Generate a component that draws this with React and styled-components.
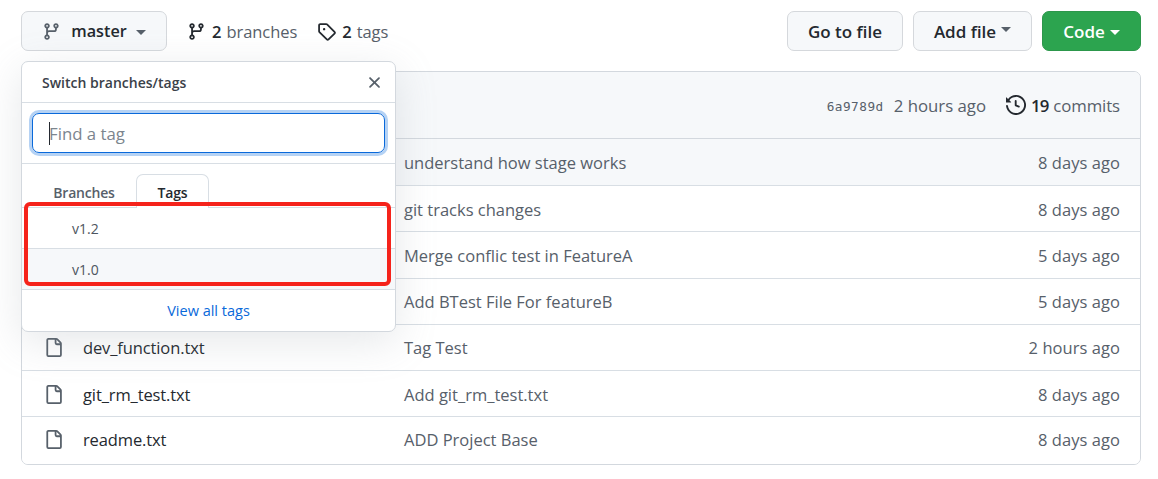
import React from "react";
import styled, { createGlobalStyle } from "styled-components";

const GlobalStyle = createGlobalStyle`
  html, body {
    margin: 0;
    background: #fff;
    color: #24292f;
    font-family: "Open Sans", "Noto Sans", Arial, sans-serif;
  }
`;

const Page = styled.div`
  position: relative;
  width: 1158px;
  height: 479px;
  box-sizing: border-box;
  padding: 11px 17px 0 21px;
  overflow: hidden;
`;

const Toolbar = styled.div`
  display: flex;
  align-items: center;
  height: 40px;
  margin-bottom: 20px;
`;

const Button = styled.div`
  display: flex;
  align-items: center;
  justify-content: center;
  box-sizing: border-box;
  height: 40px;
  margin-left: ${(p) => p.$gap || 0}px;
  width: ${(p) => p.$width}px;
  border: 1px solid ${(p) => (p.$primary ? "#2c974b" : "#d5d8dc")};
  border-radius: 7px;
  background: ${(p) => (p.$primary ? "#2ca44f" : "#f6f8fa")};
  color: ${(p) => (p.$primary ? "#fff" : "#24292f")};
  font-size: ${(p) => p.$size || 17}px;
  font-weight: 600;
`;

const BranchName = styled.span`
  margin-left: 10px;
`;

const Caret = styled.span`
  display: inline-block;
  margin-left: ${(p) => p.$gap || 6}px;
  margin-top: ${(p) => p.$top || 2}px;
  border-style: solid;
  border-width: 5px 5px 0;
  border-color: ${(p) => p.$color || "#57606a"} transparent transparent;
`;

const Stat = styled.div`
  display: flex;
  align-items: center;
  margin-left: ${(p) => p.$gap}px;
  font-size: 16.5px;
  color: #57606a;
  letter-spacing: -0.05px;
  strong {
    color: #24292f;
    font-weight: 600;
    margin: 0 5px 0 6px;
  }
`;

const Spacer = styled.div`
  flex: 1;
`;

const Icon = styled.svg`
  display: block;
  flex: none;
  fill: currentColor;
  color: ${(p) => p.$color || "#24292f"};
`;

const Box = styled.div`
  border: 1px solid #d3d8de;
  border-radius: 7px;
  overflow: hidden;
`;

const BoxHeader = styled.div`
  display: flex;
  align-items: center;
  justify-content: flex-end;
  height: 66px;
  padding: 0 20px;
  background: #f6f8fa;
  border-bottom: 1px solid #d3d8de;
  font-size: 16.8px;
  color: #57606a;
`;

const Sha = styled.span`
  font-family: "DejaVu Sans Mono", "Liberation Mono", monospace;
  font-size: 12.7px;
  letter-spacing: 0.5px;
  margin-right: 10px;
  margin-top: 2px;
`;

const Commits = styled.span`
  display: flex;
  align-items: center;
  margin-left: 20px;
  letter-spacing: -0.1px;
  strong {
    color: #24292f;
    font-weight: 600;
    letter-spacing: -1px;
    margin: 0 5px 0 5px;
  }
`;

const Row = styled.div`
  display: grid;
  grid-template-columns: 22px 338px 1fr auto;
  align-items: center;
  box-sizing: border-box;
  height: ${(p) => (p.$last ? 48 : 46.2)}px;
  padding: ${(p) => (p.$last ? "0 20px 2px 22px" : "1px 20px 0 22px")};
  background: ${(p) => (p.$hovered ? "#f6f8fa" : "#fff")};
  border-top: ${(p) => (p.$first ? "none" : "1px solid #d8dee4")};
  font-size: 16.5px;
`;

const FileName = styled.span`
  padding-left: 17px;
  color: #24292f;
  letter-spacing: -0.12px;
`;

const Message = styled.span`
  color: #57606a;
`;

const Age = styled.span`
  color: #57606a;
  letter-spacing: 0.05px;
`;

const Popover = styled.div`
  position: absolute;
  left: 21px;
  top: 61px;
  width: 375px;
  height: 271px;
  box-sizing: border-box;
  background: #fff;
  border: 1px solid #d3d8de;
  border-radius: 7px;
  box-shadow: 0 10px 40px rgba(140, 149, 159, 0.22);
  display: flex;
  flex-direction: column;
`;

const PopHeader = styled.div`
  display: flex;
  align-items: center;
  justify-content: space-between;
  height: 40px;
  padding: 0 11px 0 20px;
  border-bottom: 1px solid #d8dee4;
  font-size: 14px;
  font-weight: 600;
  color: #3a4149;
`;

const FilterArea = styled.div`
  padding: 10px;
  height: 40px;
  border-bottom: 1px solid #d8dee4;
`;

const Filter = styled.div`
  display: flex;
  align-items: center;
  box-sizing: border-box;
  height: 40px;
  padding-left: 16px;
  border: 1px solid #0969da;
  border-radius: 7px;
  box-shadow: 0 0 0 3px rgba(9, 105, 218, 0.3);
  font-size: 16.8px;
  color: #7c858e;
`;

const TextCursor = styled.span`
  width: 1px;
  height: 23px;
  margin-right: -1px;
  background: #24292f;
`;

const Tabs = styled.div`
  display: flex;
  align-items: flex-end;
  height: 44px;
  padding-left: 10px;
  border-bottom: 1px solid #d8dee4;
  box-sizing: border-box;
`;

const Tab = styled.div`
  display: flex;
  align-items: center;
  justify-content: center;
  box-sizing: border-box;
  width: ${(p) => p.$width}px;
  height: 34px;
  padding-top: 2px;
  margin-bottom: -1px;
  font-size: 14px;
  font-weight: 600;
  letter-spacing: -0.2px;
  color: ${(p) => (p.$active ? "#24292f" : "#57606a")};
  background: ${(p) => (p.$active ? "#fff" : "transparent")};
  border: 1px solid ${(p) => (p.$active ? "#d8dee4" : "transparent")};
  border-bottom: none;
  border-radius: 7px 7px 0 0;
`;

const TagItem = styled.div`
  display: flex;
  align-items: ${(p) => (p.$clipped ? "flex-start" : "center")};
  box-sizing: border-box;
  height: ${(p) => p.$height}px;
  padding: ${(p) => (p.$clipped ? "11px" : "0")} 0 0 50px;
  background: ${(p) => (p.$selected ? "#f6f8fa" : "#fff")};
  border-top: ${(p) => (p.$selected ? "1px solid #d8dee4" : "none")};
  font-size: 14px;
  color: #4d5560;
`;

const PopFooter = styled.div`
  display: flex;
  align-items: center;
  justify-content: center;
  flex: 1;
  border-top: 1px solid #d8dee4;
  font-size: 14.5px;
  color: #0969da;
`;

const Annotation = styled.div`
  position: absolute;
  left: 24px;
  top: 202px;
  width: 367px;
  height: 84px;
  box-sizing: border-box;
  border: 4px solid #f5231b;
  border-radius: 6px;
`;

const icons = {
  branch:
    "M9.5 3.25a2.25 2.25 0 1 1 3 2.122V6A2.5 2.5 0 0 1 10 8.5H6a1 1 0 0 0-1 1v1.128a2.251 2.251 0 1 1-1.5 0V5.372a2.25 2.25 0 1 1 1.5 0v1.836A2.493 2.493 0 0 1 6 7h4a1 1 0 0 0 1-1v-.628A2.25 2.25 0 0 1 9.5 3.25Zm-6 0a.75.75 0 1 0 1.5 0 .75.75 0 0 0-1.5 0Zm8.25-.75a.75.75 0 1 0 0 1.5.75.75 0 0 0 0-1.5ZM4.25 12a.75.75 0 1 0 0 1.5.75.75 0 0 0 0-1.5Z",
  tag: "M1 7.775V2.75C1 1.784 1.784 1 2.75 1h5.025c.464 0 .91.184 1.238.513l6.25 6.25a1.75 1.75 0 0 1 0 2.474l-5.026 5.026a1.75 1.75 0 0 1-2.474 0l-6.25-6.25A1.752 1.752 0 0 1 1 7.775Zm1.5 0c0 .066.026.13.073.177l6.25 6.25a.25.25 0 0 0 .354 0l5.025-5.025a.25.25 0 0 0 0-.354l-6.25-6.25a.25.25 0 0 0-.177-.073H2.75a.25.25 0 0 0-.25.25ZM6 5a1 1 0 1 1 0 2 1 1 0 0 1 0-2Z",
  history:
    "m.427 1.927 1.215 1.215a8.002 8.002 0 1 1-1.6 5.685.75.75 0 1 1 1.493-.154 6.5 6.5 0 1 0 1.18-4.458l1.358 1.358A.25.25 0 0 1 3.896 6H.25A.25.25 0 0 1 0 5.75V2.104a.25.25 0 0 1 .427-.177ZM7.75 4a.75.75 0 0 1 .75.75v2.992l2.028.812a.75.75 0 0 1-.557 1.392l-2.5-1A.751.751 0 0 1 7 8.25v-3.5A.75.75 0 0 1 7.75 4Z",
  file: "M2 1.75C2 .784 2.784 0 3.75 0h6.586c.464 0 .909.184 1.237.513l2.914 2.914c.329.328.513.773.513 1.237v9.586A1.75 1.75 0 0 1 13.25 16h-9.5A1.75 1.75 0 0 1 2 14.25Zm1.75-.25a.25.25 0 0 0-.25.25v12.5c0 .138.112.25.25.25h9.5a.25.25 0 0 0 .25-.25V6h-2.75A1.75 1.75 0 0 1 9 4.25V1.5Zm6.75.062V4.25c0 .138.112.25.25.25h2.688l-.011-.013-2.914-2.914-.013-.011Z",
  close:
    "M3.72 3.72a.75.75 0 0 1 1.06 0L8 6.94l3.22-3.22a.749.749 0 0 1 1.275.326.749.749 0 0 1-.215.734L9.06 8l3.22 3.22a.749.749 0 0 1-.326 1.275.749.749 0 0 1-.734-.215L8 9.06l-3.22 3.22a.751.751 0 0 1-1.042-.018.751.751 0 0 1-.018-1.042L6.94 8 3.72 4.78a.75.75 0 0 1 0-1.06Z",
};

function Octicon({ name, size = 19, color }) {
  return (
    <Icon viewBox="0 0 16 16" width={size} height={size} $color={color}>
      <path d={icons[name]} />
    </Icon>
  );
}

const files = [
  { name: "", message: "understand how stage works", age: "8 days ago" },
  { name: "", message: "git tracks changes", age: "8 days ago" },
  { name: "", message: "Merge conflic test in FeatureA", age: "5 days ago" },
  { name: "", message: "Add BTest File For featureB", age: "5 days ago" },
  { name: "dev_function.txt", message: "Tag Test", age: "2 hours ago" },
  { name: "git_rm_test.txt", message: "Add git_rm_test.txt", age: "8 days ago" },
  { name: "readme.txt", message: "ADD Project Base", age: "8 days ago" },
];

export default function App() {
  return (
    <Page>
      <GlobalStyle />
      <Toolbar>
        <Button $width={146} $size={16.2}>
          <Octicon name="branch" color="#57606a" />
          <BranchName>master</BranchName>
          <Caret $gap={9} $top={3} />
        </Button>
        <Stat $gap={20}>
          <Octicon name="branch" />
          <strong>2</strong>branches
        </Stat>
        <Stat $gap={20}>
          <Octicon name="tag" />
          <strong>2</strong>tags
        </Stat>
        <Spacer />
        <Button $width={116}>Go to file</Button>
        <Button $width={119} $gap={10}>
          Add file
          <Caret $gap={5} $top={-4} />
        </Button>
        <Button $width={99} $gap={10} $primary>
          Code
          <Caret $gap={5} $top={2} $color="#fff" />
        </Button>
      </Toolbar>

      <Box>
        <BoxHeader>
          <Sha>6a9789d</Sha>
          2 hours ago
          <Commits>
            <Octicon name="history" size={20} />
            <strong>19</strong>commits
          </Commits>
        </BoxHeader>
        {files.map((file, i) => (
          <Row
            key={file.message}
            $first={i === 0}
            $hovered={i === 0}
            $last={i === files.length - 1}
          >
            <Octicon name="file" color="#57606a" />
            <FileName>{file.name}</FileName>
            <Message>{file.message}</Message>
            <Age>{file.age}</Age>
          </Row>
        ))}
      </Box>

      <Popover>
        <PopHeader>
          Switch branches/tags
          <Octicon name="close" size={19} color="#57606a" />
        </PopHeader>
        <FilterArea>
          <Filter>
            <TextCursor />
            Find a tag
          </Filter>
        </FilterArea>
        <Tabs>
          <Tab $width={104}>Branches</Tab>
          <Tab $width={73} $active>
            Tags
          </Tab>
        </Tabs>
        <TagItem $height={40}>v1.2</TagItem>
        <TagItem $height={41} $selected $clipped>
          v1.0
        </TagItem>
        <PopFooter>View all tags</PopFooter>
      </Popover>

      <Annotation />
    </Page>
  );
}
